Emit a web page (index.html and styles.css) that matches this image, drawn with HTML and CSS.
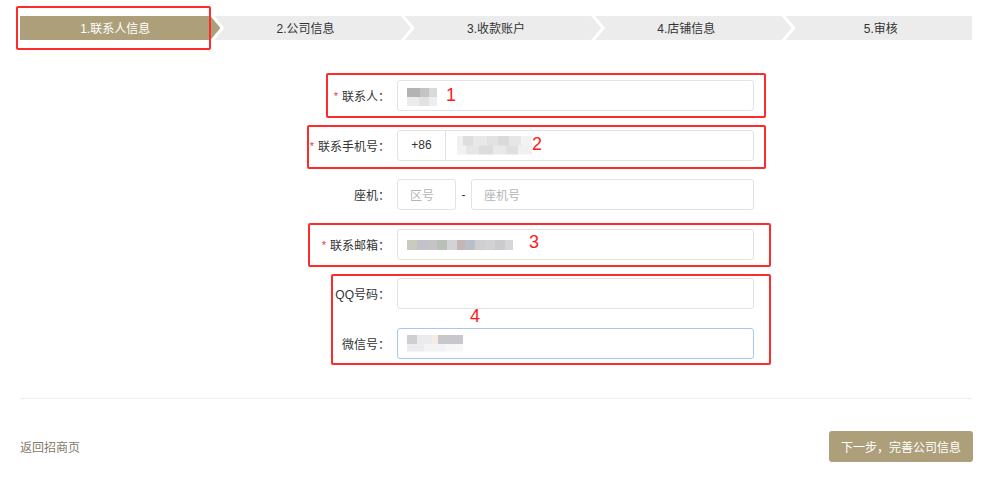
FILE: index.html
```html
<!DOCTYPE html>
<html lang="zh-CN">
<head>
<meta charset="utf-8">
<title>联系人信息</title>
<link rel="stylesheet" href="styles.css">
</head>
<body>
<div class="page">
  <div class="steps">
    <div class="step step-first active">1.联系人信息</div>
    <div class="step">2.公司信息</div>
    <div class="step">3.收款账户</div>
    <div class="step">4.店铺信息</div>
    <div class="step step-last">5.审核</div>
  </div>

  <form class="form">
    <div class="row">
      <label class="label"><span class="req">*</span>联系人：</label>
      <div class="field"><span class="mosaic mosaic-name"></span></div>
    </div>
    <div class="row">
      <label class="label"><span class="req">*</span>联系手机号：</label>
      <div class="field field-split">
        <span class="prefix">+86</span>
        <span class="mosaic mosaic-phone"></span>
      </div>
    </div>
    <div class="row">
      <label class="label">座机：</label>
      <div class="tel">
        <div class="field field-area"><span class="ph">区号</span></div>
        <span class="dash">-</span>
        <div class="field field-tel"><span class="ph">座机号</span></div>
      </div>
    </div>
    <div class="row">
      <label class="label"><span class="req">*</span>联系邮箱：</label>
      <div class="field"><span class="mosaic mosaic-mail"></span></div>
    </div>
    <div class="row">
      <label class="label">QQ号码：</label>
      <div class="field"></div>
    </div>
    <div class="row">
      <label class="label">微信号：</label>
      <div class="field field-focus"><span class="mosaic mosaic-wx"></span></div>
    </div>
  </form>

  <div class="divider"></div>

  <div class="footer">
    <a class="back" href="#">返回招商页</a>
    <button class="next" type="button">下一步，完善公司信息</button>
  </div>

  <div class="mark mark-step"></div>
  <div class="mark mark-1"></div>
  <div class="mark mark-2"></div>
  <div class="mark mark-3"></div>
  <div class="mark mark-4"></div>
  <span class="num num-1">1</span>
  <span class="num num-2">2</span>
  <span class="num num-3">3</span>
  <span class="num num-4">4</span>
</div>
</body>
</html>
```

FILE: styles.css
```css
* { box-sizing: border-box; }

html, body {
  margin: 0;
  padding: 0;
  background: #fff;
}

body {
  font-family: "Liberation Sans", "Noto Sans CJK SC", sans-serif;
  font-size: 12px;
  color: #333;
}

.page {
  position: relative;
  width: 997px;
  height: 484px;
  padding: 16px 25px 0 20px;
}

/* ---------- steps ---------- */
.steps {
  display: flex;
  width: 952px;
  height: 24px;
}

.step {
  flex: 0 0 calc(20% + 10px);
  margin-right: -10px;
  padding-right: 10px;
  padding-top: 1px;
  height: 24px;
  line-height: 24px;
  text-align: center;
  background: #ececec;
  color: #333;
  clip-path: polygon(4px 0, calc(100% - 10px) 0, 100% 50%, calc(100% - 10px) 100%, 4px 100%, 14px 50%);
}

.step-first {
  clip-path: polygon(0 0, calc(100% - 10px) 0, 100% 50%, calc(100% - 10px) 100%, 0 100%);
}

.step-last {
  flex: 0 0 20%;
  margin-right: 0;
  padding-right: 0;
  padding-left: 8px;
  clip-path: polygon(4px 0, 100% 0, 100% 100%, 4px 100%, 14px 50%);
}

.step.active {
  background: #ae9f7b;
  color: #fff;
}

/* ---------- form ---------- */
.form {
  margin-top: 40px;
  display: flex;
  flex-direction: column;
  gap: 18.5px;
}

.row {
  display: flex;
  align-items: center;
  height: 31px;
}

.label {
  width: 124px;
  margin-left: 246px;
  margin-right: 7px;
  text-align: right;
  color: #333;
  white-space: nowrap;
}

.req {
  color: #e4393c;
  margin-right: 4px;
  font-size: 11px;
  position: relative;
  top: -1px;
}

.field {
  width: 357px;
  height: 31px;
  border: 1px solid #e3e3e3;
  border-radius: 3px;
  display: flex;
  align-items: center;
  padding-left: 9px;
  background: #fff;
}

.field-split {
  padding-left: 0;
}

.prefix {
  width: 48px;
  height: 100%;
  display: flex;
  align-items: center;
  justify-content: center;
  border-right: 1px solid #e3e3e3;
  color: #333;
  margin-right: 11px;
}

.tel {
  display: flex;
  align-items: center;
}

.field-area {
  width: 59px;
  padding-left: 12px;
}

.dash {
  width: 15px;
  text-align: center;
  color: #333;
}

.field-tel {
  width: 283px;
  padding-left: 12px;
}

.ph {
  color: #b5b5b5;
}

.field-focus {
  border-color: #a7c6f2;
}

/* blurred (mosaic) values */
.mosaic {
  display: block;
  filter: blur(0.5px);
}

.mosaic-name {
  width: 30px;
  height: 18px;
  margin-top: 2px;
  background:
    linear-gradient(90deg, #b3b3b3 0 45%, #c4c4c4 45% 75%, #d9d9d9 75%) top / 100% 50% no-repeat,
    linear-gradient(90deg, #ececec 0 40%, #e2e2e2 40% 75%, #eeeeee 75%) bottom / 100% 50% no-repeat;
}

.mosaic-phone {
  width: 75px;
  height: 19px;
  background:
    linear-gradient(90deg, #f0f0f0 0 8%, #dedede 8% 22%, #e8e8e8 22% 40%, #e2e2e2 40% 55%, #dadada 55% 70%, #e6e6e6 70% 85%, #f2f2f2 85%) top / 100% 50% no-repeat,
    linear-gradient(90deg, #f2f2f2 0 12%, #e6e6e6 12% 30%, #dcdcdc 30% 48%, #e9e9e9 48% 66%, #e0e0e0 66% 82%, #f0f0f0 82%) bottom / 100% 50% no-repeat;
}

.mosaic-mail {
  width: 106px;
  height: 10px;
  margin-top: 2px;
  background: linear-gradient(90deg,
    #c9cbbd 0 9%, #c2c2c8 9% 19%, #c7c2c6 19% 28%, #b8c0b8 28% 38%,
    #d3d3d6 38% 47%, #c3b7b6 47% 55%, #b9c0c9 55% 64%, #cfcfd2 64% 74%,
    #d2d2d4 74% 83%, #cbcbcd 83% 92%, #d6d6d8 92%);
}

.mosaic-wx {
  width: 56px;
  height: 17px;
  background:
    linear-gradient(90deg, #cfcfd1 0 18%, #ebebee 18% 45%, #f4ede3 45% 55%, #c8c8cc 55% 100%) top / 100% 55% no-repeat,
    linear-gradient(90deg, #ececee 0 30%, #f3f3f5 30% 70%, #f7f7f7 70%) bottom / 100% 45% no-repeat;
}

/* ---------- footer ---------- */
.divider {
  margin-top: 39.5px;
  height: 1px;
  width: 952px;
  background: #eeeeee;
}

.footer {
  width: 953px;
  margin-top: 32px;
  display: flex;
  align-items: center;
  justify-content: space-between;
}

.back {
  color: #857b6b;
  text-decoration: none;
}

.next {
  width: 144px;
  height: 31px;
  border: none;
  border-radius: 3px;
  background: #ae9f7b;
  color: #fff;
  font-family: "Liberation Sans", "Noto Sans CJK SC", sans-serif;
  font-size: 12px;
  padding: 0;
}

/* ---------- red annotations (overlay) ---------- */
.mark {
  position: absolute;
  border: 2px solid #ff2a2a;
  border-radius: 2px;
}

.mark-step { left: 16px; top: 6px; width: 195px; height: 44px; }
.mark-1 { left: 326px; top: 73px; width: 440px; height: 45px; }
.mark-2 { left: 307px; top: 125px; width: 459px; height: 44px; }
.mark-3 { left: 308px; top: 223px; width: 463px; height: 44px; }
.mark-4 { left: 331px; top: 274px; width: 440px; height: 91px; }

.num {
  position: absolute;
  color: #ff1a1a;
  font-family: "Liberation Sans", sans-serif;
  font-size: 18px;
  line-height: 18px;
}

.num-1 { left: 446px; top: 86px; }
.num-2 { left: 532px; top: 135px; }
.num-3 { left: 529px; top: 233px; }
.num-4 { left: 470px; top: 307px; }
```
